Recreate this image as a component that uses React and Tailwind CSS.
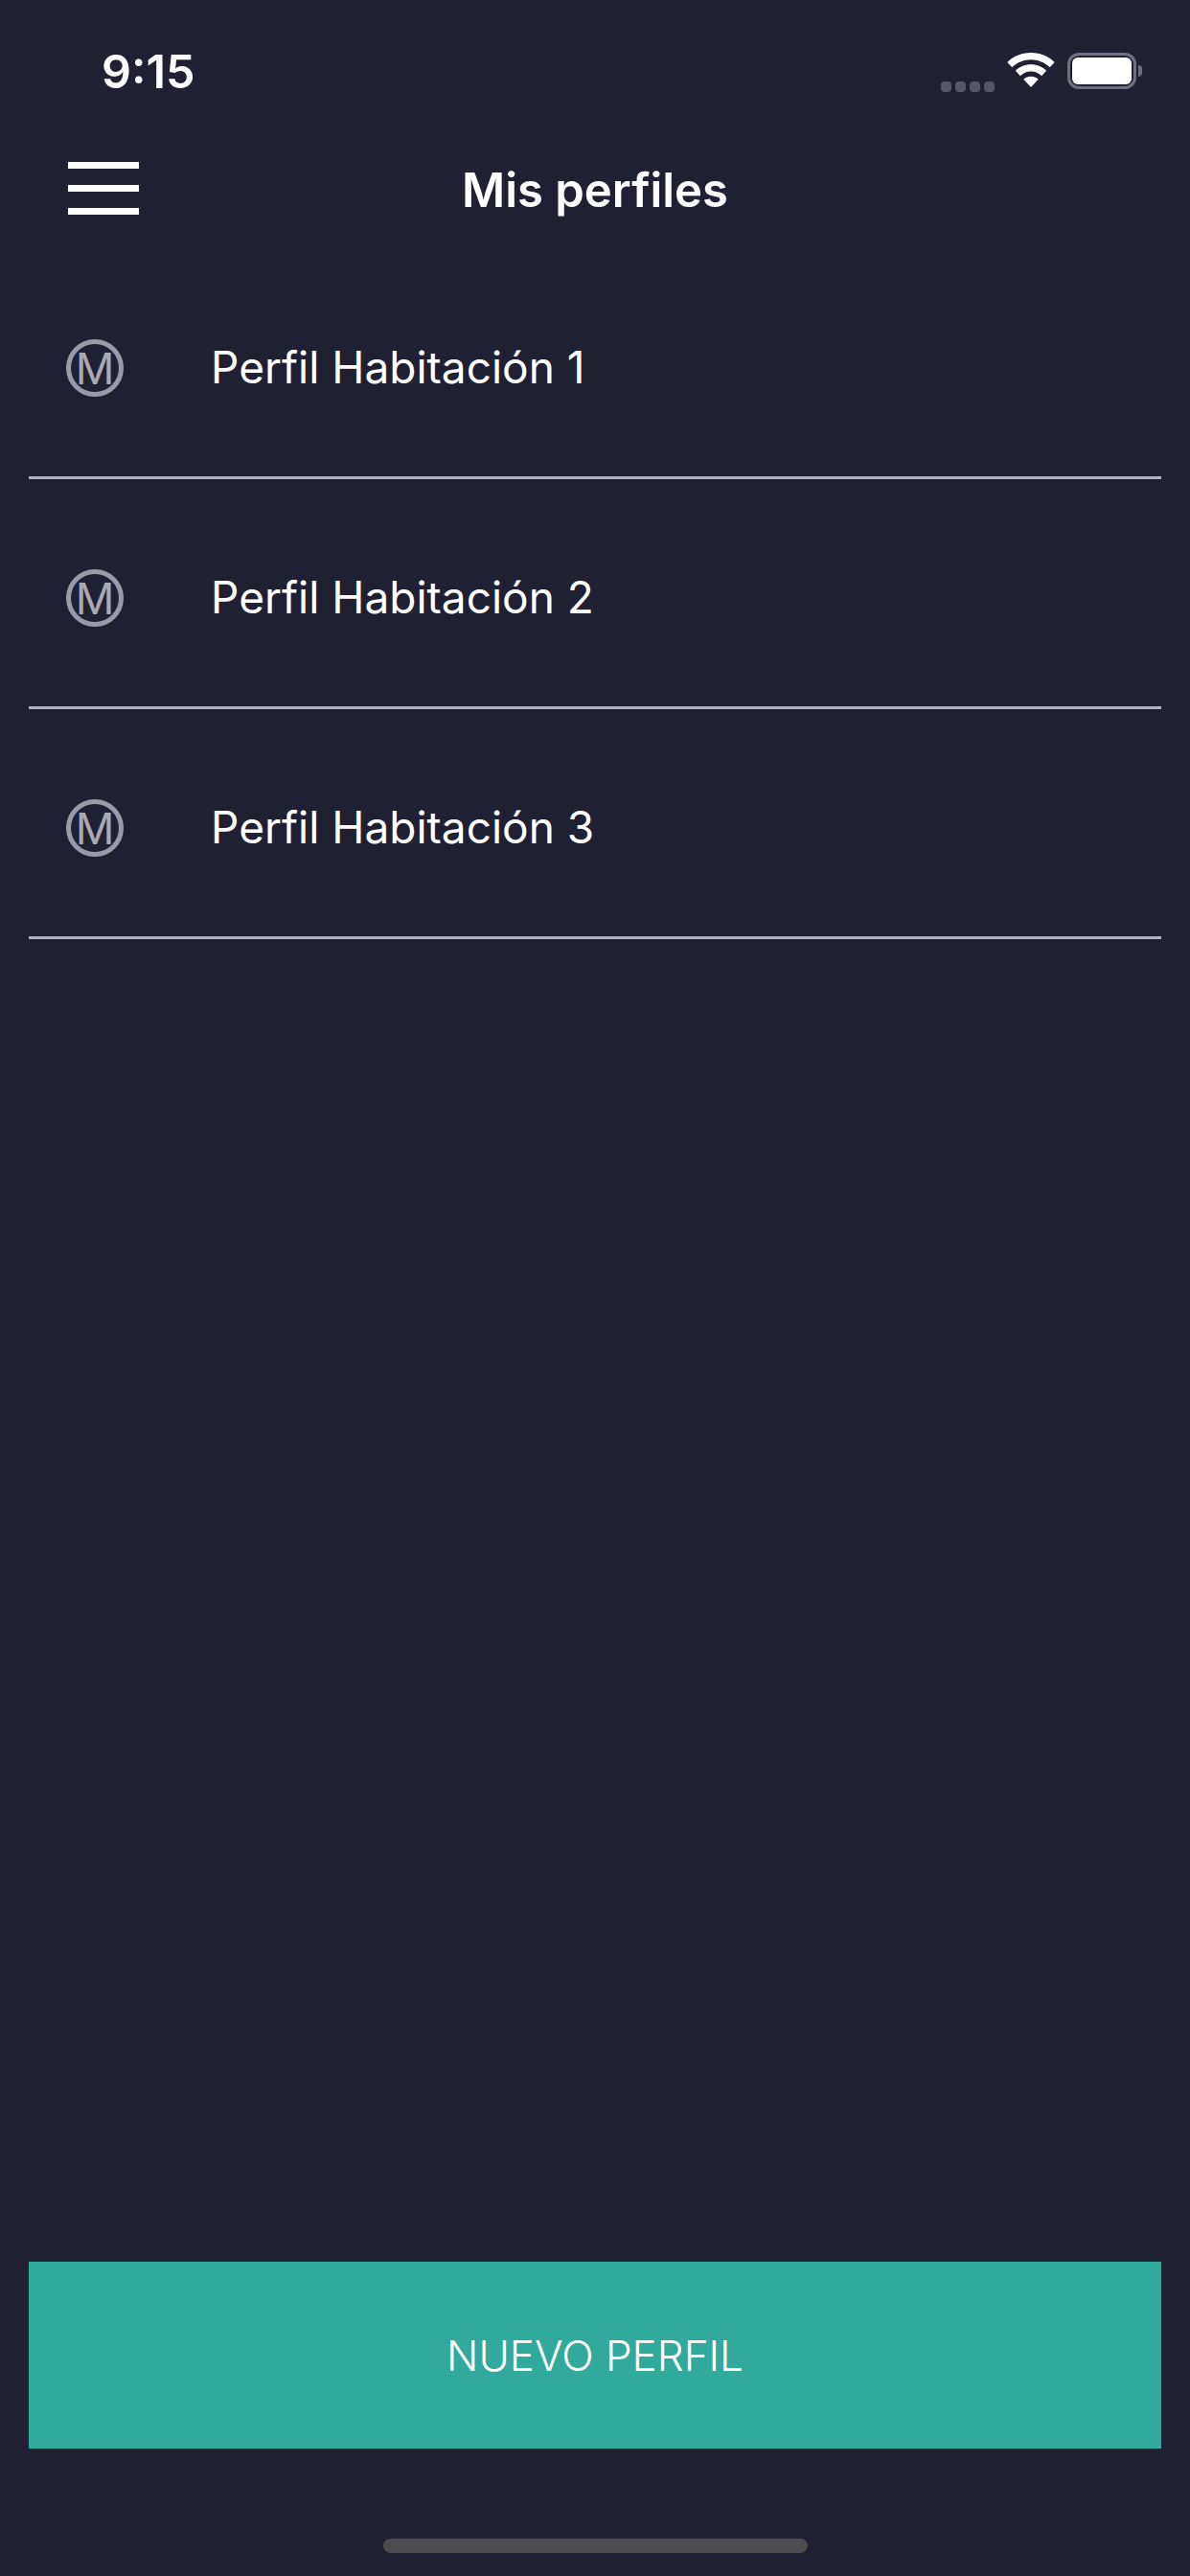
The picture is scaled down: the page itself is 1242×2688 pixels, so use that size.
const profiles = ["Perfil Habitación 1", "Perfil Habitación 2", "Perfil Habitación 3"];

function Wifi() {
  return (
    <svg width="52" height="38" viewBox="0 0 54 40" fill="#fff">
      <path d="M27 0C16.5 0 7.5 4 1 10.5l5.200 5.600C11.600 10.800 18.900 7.600 27 7.600s15.400 3.200 20.800 8.500L53 10.500C46.500 4 37.500 0 27 0z" />
      <path d="M27 13c-6.800 0-12.700 2.600-17 6.800l5.300 5.600c3-3 7.100-4.800 11.700-4.800s8.700 1.800 11.700 4.800L44 19.800C39.700 15.600 33.800 13 27 13z" />
      <path d="M27 26c-3.200 0-6 1.200-8.100 3.200L27 38l8.100-8.800C33 27.200 30.200 26 27 26z" />
    </svg>
  );
}

function StatusBar() {
  return (
    <div className="mt-[46px] flex h-[56px] items-center justify-between pl-[106px] pr-[50px]">
      <span className="mt-[3px] text-[48.5px] font-semibold leading-none text-white">9:15</span>
      <div className="flex items-center">
        <div className="mt-[32px] flex gap-[4px]">
          <span className="h-[11px] w-[11px] rounded-[4px] bg-[#55566a]" />
          <span className="h-[11px] w-[11px] rounded-[4px] bg-[#55566a]" />
          <span className="h-[11px] w-[11px] rounded-[4px] bg-[#55566a]" />
          <span className="h-[11px] w-[11px] rounded-[4px] bg-[#55566a]" />
        </div>
        <div className="ml-[12px] mr-[12px] flex">
          <Wifi />
        </div>
        <div className="flex items-center">
          <div className="flex h-[38px] w-[72px] items-center justify-center rounded-[12px] border-[3px] border-[#6e6f80] p-[2px]">
            <div className="h-full w-full rounded-[6px] bg-white" />
          </div>
          <div className="ml-[2px] h-[12px] w-[4px] rounded-r-full bg-[#6e6f80]" />
        </div>
      </div>
    </div>
  );
}

function Header() {
  return (
    <div className="relative mt-[54px] flex h-[80px] items-center justify-center">
      <div className="absolute left-[71px] top-[13px] flex w-[74px] flex-col gap-[17px]">
        <span className="h-[7px] bg-white" />
        <span className="h-[7px] bg-white" />
        <span className="h-[7px] bg-white" />
      </div>
      <h1 className="mt-[4px] text-[49px] font-semibold leading-none text-white">Mis perfiles</h1>
    </div>
  );
}

function ProfileRow({ name }) {
  return (
    <div className="flex h-[240px] items-center border-b-[3px] border-[#b4b5ba] pl-[39px] pt-[11px]">
      <div className="flex h-[60px] w-[60px] items-center justify-center rounded-full border-[5px] border-[#9a9aa6]">
        <span className="text-[45px] leading-none text-[#a9a9b3]">M</span>
      </div>
      <span className="-mt-[3px] ml-[91px] text-[46px] leading-none text-white">{name}</span>
    </div>
  );
}

export default function App() {
  return (
    <div className="flex h-[2688px] w-[1242px] flex-col overflow-hidden bg-[#1f2032] font-['Inter',sans-serif]">
      <StatusBar />
      <Header />
      <div className="mx-[30px] mt-[24px] flex flex-col">
        {profiles.map((p) => (
          <ProfileRow key={p} name={p} />
        ))}
      </div>
      <button className="mx-[30px] mt-auto flex h-[195px] items-center justify-center bg-[#31aa9d] text-[44px] font-light leading-none text-white">
        NUEVO PERFIL
      </button>
      <div className="mb-[24px] mt-[94px] flex justify-center">
        <div className="h-[15px] w-[443px] rounded-full bg-[#4c4c4e]" />
      </div>
    </div>
  );
}
